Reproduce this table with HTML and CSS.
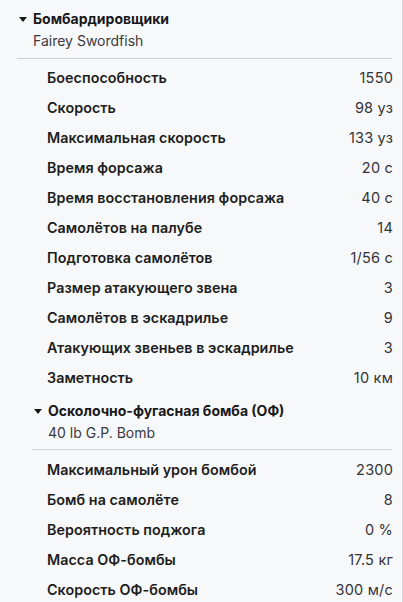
FILE: index.html
```html
<!DOCTYPE html>
<html lang="ru">
<head>
<meta charset="utf-8">
<link rel="stylesheet" href="styles.css">
</head>
<body>
<div class="panel">
  <div class="section">
    <div class="head">
      <div class="title"><span class="caret"></span>Бомбардировщики</div>
      <div class="sub">Fairey Swordfish</div>
    </div>
    <div class="rows">
      <div class="row"><span class="label">Боеспособность</span><span class="value">1550</span></div>
      <div class="row"><span class="label">Скорость</span><span class="value">98 уз</span></div>
      <div class="row"><span class="label">Максимальная скорость</span><span class="value">133 уз</span></div>
      <div class="row"><span class="label">Время форсажа</span><span class="value">20 с</span></div>
      <div class="row"><span class="label">Время восстановления форсажа</span><span class="value">40 с</span></div>
      <div class="row"><span class="label">Самолётов на палубе</span><span class="value">14</span></div>
      <div class="row"><span class="label">Подготовка самолётов</span><span class="value">1/56 с</span></div>
      <div class="row"><span class="label">Размер атакующего звена</span><span class="value">3</span></div>
      <div class="row"><span class="label">Самолётов в эскадрилье</span><span class="value">9</span></div>
      <div class="row"><span class="label">Атакующих звеньев в эскадрилье</span><span class="value">3</span></div>
      <div class="row"><span class="label">Заметность</span><span class="value">10 км</span></div>
    </div>
    <div class="section nested">
      <div class="head">
        <div class="title"><span class="caret"></span>Осколочно-фугасная бомба (ОФ)</div>
        <div class="sub">40 lb G.P. Bomb</div>
      </div>
      <div class="rows">
        <div class="row"><span class="label">Максимальный урон бомбой</span><span class="value">2300</span></div>
        <div class="row"><span class="label">Бомб на самолёте</span><span class="value">8</span></div>
        <div class="row"><span class="label">Вероятность поджога</span><span class="value">0 %</span></div>
        <div class="row"><span class="label">Масса ОФ-бомбы</span><span class="value">17.5 кг</span></div>
        <div class="row"><span class="label">Скорость ОФ-бомбы</span><span class="value">300 м/с</span></div>
      </div>
    </div>
  </div>
</div>
</body>
</html>
```

FILE: styles.css
```css
html, body {
  margin: 0;
  padding: 0;
  background: #f7f8fa;
  height: 100%;
  overflow: hidden;
}
body {
  font-family: Inter, "Noto Sans", sans-serif;
  color: #1d1d1f;
}
.panel {
  padding: 8px 10px 0 17px;
  border-right: 1px solid #d4d4d8;
  width: 375px;
  height: 100%;
  box-sizing: content-box;
}
.head {
  padding-bottom: 6px;
  border-bottom: 1px solid #cfcfd3;
}
.title {
  display: flex;
  align-items: center;
  font-size: 14px;
  font-weight: 700;
  line-height: 22px;
  color: #18181b;
}
.caret {
  width: 0;
  height: 0;
  border-left: 4.5px solid transparent;
  border-right: 4.5px solid transparent;
  border-top: 5px solid #18181b;
  margin: 1px 6px 0 2px;
}
.sub {
  padding-left: 16px;
  font-size: 14px;
  line-height: 22px;
  color: #3a3a40;
}
.rows {
  padding: 3px 0 0 30px;
}
.row {
  display: flex;
  justify-content: space-between;
  align-items: center;
  height: 30px;
}
.label {
  font-size: 14.3px;
  font-weight: 600;
  color: #1d1d20;
  letter-spacing: 0.05px;
}
.value {
  font-size: 14.5px;
  color: #333338;
  letter-spacing: 0.2px;
  margin-right: -1px;
}
.nested {
  padding: 8px 0 0 15px;
}
.nested .head {
  padding-bottom: 5px;
}
.nested .rows {
  padding-top: 4px;
  padding-left: 15px;
}
```
